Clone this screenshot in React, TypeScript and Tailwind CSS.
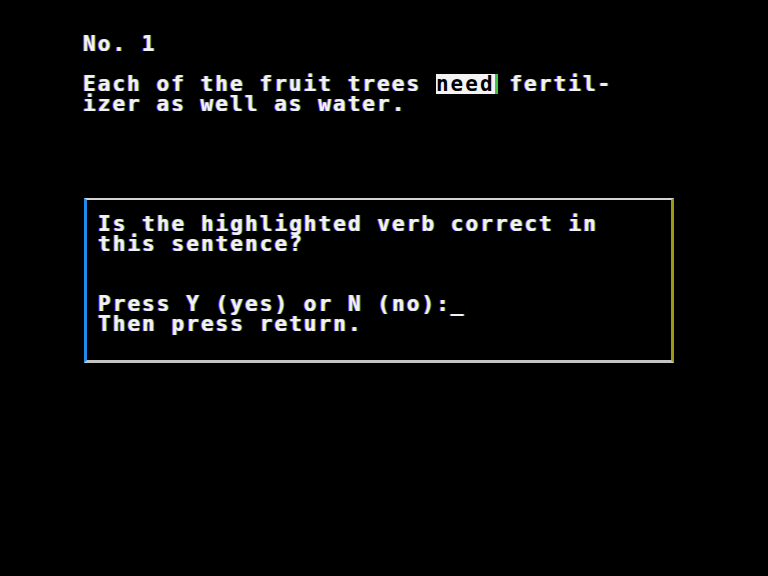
// Apple II style grammar drill screen
const glow = '[text-shadow:-1px_0_0_rgba(176,80,255,0.85),1px_0_0_rgba(80,240,80,0.6)]'

function Row({ children }: { children?: React.ReactNode }) {
  return <div className="h-[20px] whitespace-pre">{children}</div>
}

export default function App() {
  return (
    <div
      className={`w-[768px] h-[576px] bg-black overflow-hidden pt-[34px] pl-[83px] text-[#f2f2f2] text-[21px] leading-[20px] font-bold tracking-[2.06px] ${glow}`}
      style={{ fontFamily: '"DejaVu Sans Mono", "Liberation Mono", monospace' }}
    >
      <Row>No. 1</Row>
      <Row />
      <Row>
        Each of the fruit trees{' '}
        <span className="inline-block h-[20px] align-top bg-[#f4f4f4] text-black [text-shadow:none] shadow-[3px_0_0_#3cc83c]">
          need
        </span>{' '}
        fertil-
      </Row>
      <Row>izer as well as water.</Row>

      <div className="mt-[84px] ml-[1px] w-[590px] h-[165px] border-t-[2px] border-t-[#d4d4d4] border-b-[3px] border-b-[#c4c4c4] border-l-[3px] border-l-[#1e8ce8] border-r-[3px] border-r-[#9c9a12] pt-[14px] pl-[11px]">
        <Row>Is the highlighted verb correct in</Row>
        <Row>this sentence?</Row>
        <Row />
        <Row />
        <Row>Press Y (yes) or N (no):_</Row>
        <Row>Then press return.</Row>
      </div>
    </div>
  )
}
